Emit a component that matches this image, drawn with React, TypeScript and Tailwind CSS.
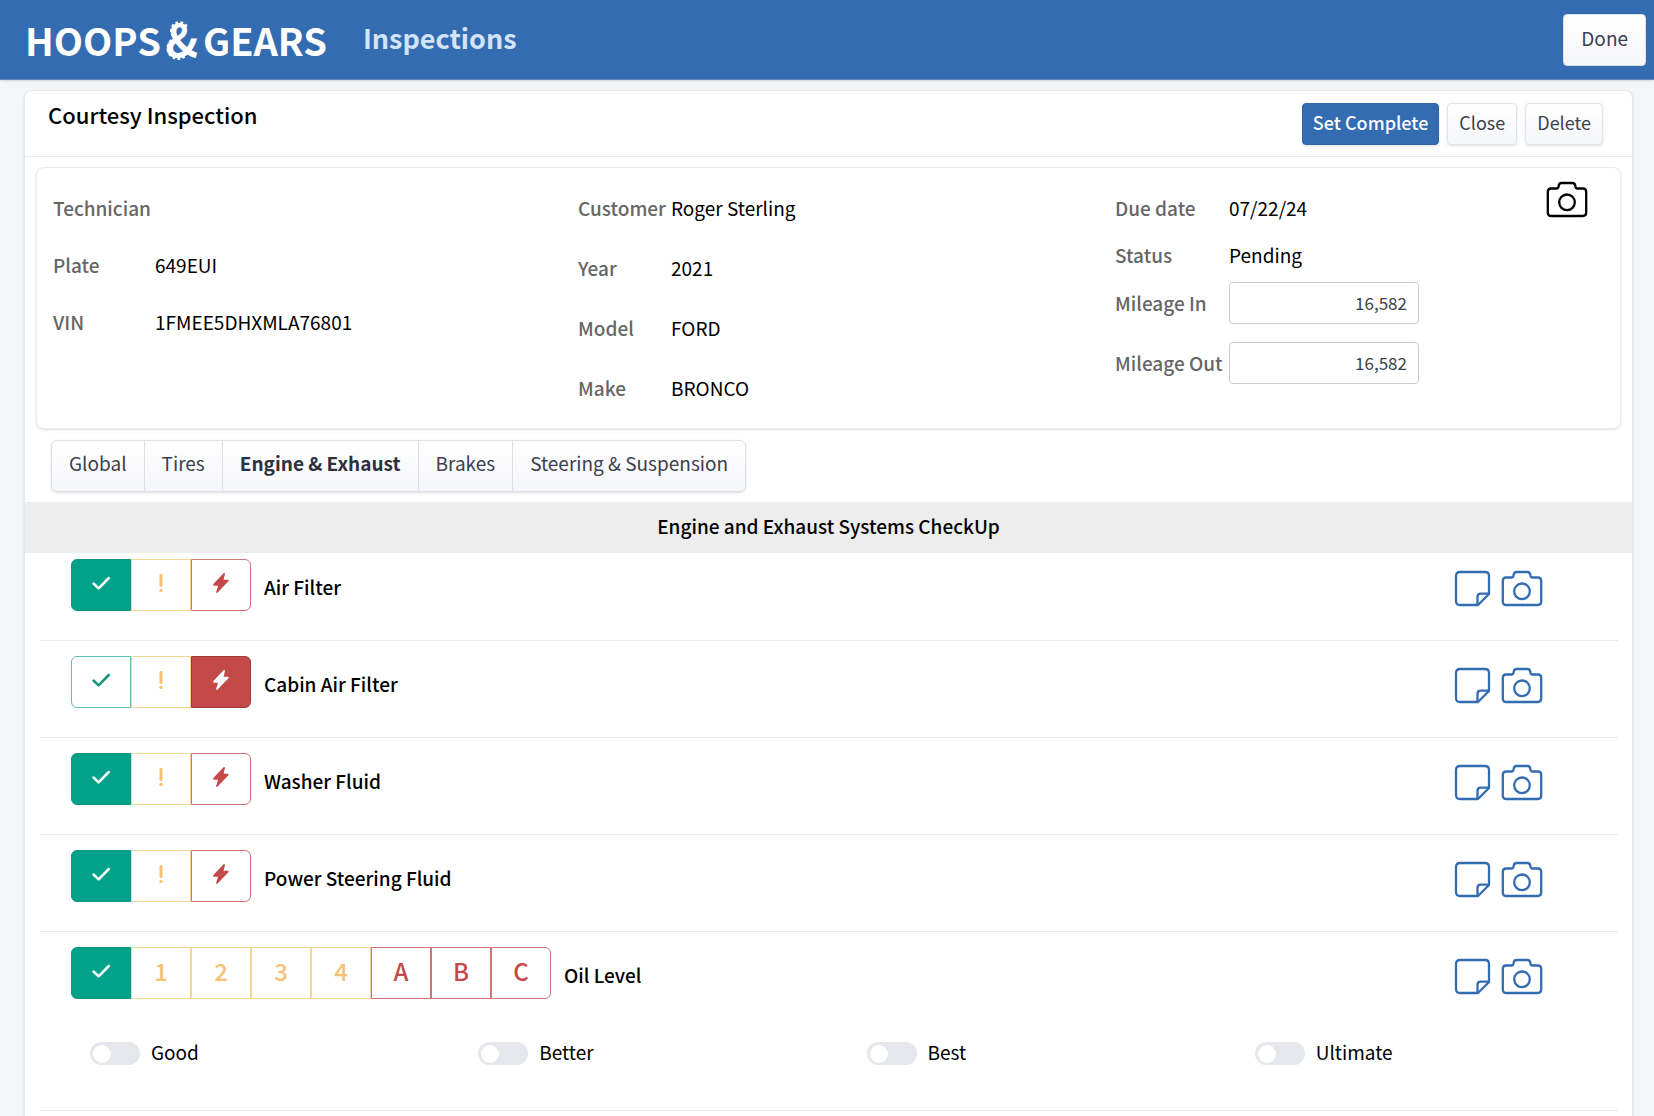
import { useState } from 'react';

type Tone = 'good' | 'warn' | 'bad';

interface Option {
  id: string;
  tone: Tone;
}

interface Item {
  name: string;
  value: string;
  options: Option[];
  grades?: string[];
}

const basicOptions: Option[] = [
  { id: 'ok', tone: 'good' },
  { id: 'warning', tone: 'warn' },
  { id: 'urgent', tone: 'bad' },
];

const oilOptions: Option[] = [
  { id: 'ok', tone: 'good' },
  { id: '1', tone: 'warn' },
  { id: '2', tone: 'warn' },
  { id: '3', tone: 'warn' },
  { id: '4', tone: 'warn' },
  { id: 'A', tone: 'bad' },
  { id: 'B', tone: 'bad' },
  { id: 'C', tone: 'bad' },
];

const initialItems: Item[] = [
  { name: 'Air Filter', value: 'ok', options: basicOptions },
  { name: 'Cabin Air Filter', value: 'urgent', options: basicOptions },
  { name: 'Washer Fluid', value: 'ok', options: basicOptions },
  { name: 'Power Steering Fluid', value: 'ok', options: basicOptions },
  { name: 'Oil Level', value: 'ok', options: oilOptions, grades: ['Good', 'Better', 'Best', 'Ultimate'] },
];

const tabs = ['Global', 'Tires', 'Engine & Exhaust', 'Brakes', 'Steering & Suspension'];

const toneOff: Record<Tone, string> = {
  good: 'border-[#5fc0b0] bg-white text-[#12967f]',
  warn: 'border-[#f6d695] bg-white text-[#f3c273]',
  bad: 'border-[#cf7574] bg-white text-[#c44a4a]',
};

const toneOn: Record<Tone, string> = {
  good: 'border-[#12967f] bg-[#02a28a] text-white',
  warn: 'border-[#e5b25c] bg-[#f3c273] text-white',
  bad: 'border-[#a03a3a] bg-[#c44a4a] text-white',
};

function CameraIcon() {
  return (
    <svg width="42" height="38" viewBox="0 0 42 38" fill="none" stroke="currentColor" strokeWidth="2.3" strokeLinejoin="round" aria-hidden="true">
      <path d="M5 7.5H10.5C12 7.5 12.3 6.6 12.6 5.2C12.9 3.2 13.6 2 15.5 2H26.5C28.4 2 29.1 3.2 29.4 5.2C29.7 6.6 30 7.5 31.5 7.5H37C39.2 7.5 40.2 8.8 40.2 11V31.5C40.2 33.8 39 35 36.8 35H5.2C3 35 1.8 33.8 1.8 31.5V11C1.8 8.8 2.8 7.5 5 7.5Z" />
      <circle cx="21" cy="21.3" r="7.8" />
    </svg>
  );
}

function NoteIcon() {
  return (
    <svg width="38" height="38" viewBox="0 0 38 38" fill="none" stroke="currentColor" strokeWidth="2.3" strokeLinejoin="round" aria-hidden="true">
      <path d="M6 2H31C33.8 2 35 3.2 35 6V24L24 35H6C3.2 35 2 33.8 2 31V6C2 3.2 3.2 2 6 2Z" />
      <path d="M23.5 34.8V27C23.5 24.8 24.5 23.7 26.7 23.7H34.8" />
    </svg>
  );
}

function OptionIcon({ id }: { id: string }) {
  if (id === 'ok') {
    return (
      <svg width="20" height="20" viewBox="0 0 20 20" fill="none" stroke="currentColor" strokeWidth="2.5" strokeLinecap="round" strokeLinejoin="round" aria-hidden="true">
        <path d="M2.5 10.5L7.6 15.3L17.8 5" />
      </svg>
    );
  }
  if (id === 'warning') {
    return (
      <svg width="20" height="20" viewBox="0 0 20 20" fill="currentColor" aria-hidden="true">
        <rect x="8.5" y="1" width="3" height="13" rx="1.4" />
        <circle cx="10" cy="17.4" r="1.7" />
      </svg>
    );
  }
  if (id === 'urgent') {
    return (
      <svg width="20" height="20" viewBox="0 0 20 20" fill="currentColor" aria-hidden="true">
        <path d="M12.6 0.2C13.3 -0.2 14.2 0.2 13.9 1.2L12.6 6.8H16.8C17.8 6.8 17.9 7.8 17.2 8.6L6.6 19.6C5.8 20.2 4.9 19.8 5.2 18.8L7.1 12.8H3.4C2.2 12.8 1.8 11.6 2.6 10.7Z" />
      </svg>
    );
  }
  return <span className="text-2xl leading-6 font-medium">{id}</span>;
}

function Logo() {
  return (
    <a href="#" aria-label="Hoops & Gears" className="flex items-center gap-[2px] text-[38px] leading-10 font-bold text-white">
      <span>HOOPS</span>
      <span className="relative flex h-11 w-[38px] items-center justify-center pb-1 text-[44px]">
        &amp;
        {/* gear teeth around both bowls of the ampersand */}
        <svg className="absolute inset-0" width="38" height="44" viewBox="0 0 38 44" fill="none" stroke="currentColor" strokeWidth="3" aria-hidden="true">
          <path d="M8.5 22.5A10 10 0 1 0 22 38" strokeDasharray="2.6 2.2" />
          <path d="M10.5 18A8 8 0 1 1 24 10" strokeDasharray="2.6 2.2" />
        </svg>
      </span>
      <span>GEARS</span>
    </a>
  );
}

function Field({ label, value, className }: { label: string; value: string; className: string }) {
  return (
    <div className={`flex items-center ${className}`}>
      <dt className="shrink-0 font-medium text-[#666]">{label}</dt>
      <dd>{value}</dd>
    </div>
  );
}

export default function App() {
  const [items, setItems] = useState(initialItems);
  const [tab, setTab] = useState('Engine & Exhaust');
  const [mileageIn, setMileageIn] = useState('16,582');
  const [mileageOut, setMileageOut] = useState('16,582');

  const setValue = (name: string, value: string) => {
    setItems(items.map((item) => (item.name === name ? { ...item, value } : item)));
  };

  return (
    <div className="min-h-screen bg-[#f5f6f9] font-['Noto_Sans_CJK_SC','Noto_Sans',sans-serif] text-[19px] leading-6 text-black">
      <header className="flex h-20 items-center border-b border-[#5c89c0] bg-[#336cb0] pr-2 pl-[25px] shadow-sm">
        <Logo />
        <h1 className="ml-9 pb-1 text-[27px] leading-8 font-bold text-[#d3e3f8]">Inspections</h1>
        <button className="ml-auto h-[52px] rounded border border-[#dfe1e8] bg-linear-to-b from-white to-[#f5f6f9] px-[17px] pb-1 text-[#3c3f4c]">Done</button>
      </header>

      <main className="mt-[10px] mr-[21px] ml-6 rounded-lg border border-b-0 border-[#e6e8ec] bg-white pb-8 shadow-sm">
        <div className="flex items-start border-b border-[#ebebeb] pt-3 pr-[29px] pb-[11px] pl-[23px]">
          <h2 className="text-[22px] leading-[22px] font-medium">Courtesy Inspection</h2>
          <div className="ml-auto flex gap-2 text-lg">
            <button className="h-[42px] rounded border border-[#2f66a8] bg-[#336cb0] px-[10px] pb-1 font-medium text-white shadow-sm">Set Complete</button>
            <button className="h-[42px] rounded border border-[#e2e4ea] bg-linear-to-b from-white to-[#f5f6f9] px-[11px] pb-1 text-[#3c3f4c] shadow-sm">Close</button>
            <button className="h-[42px] rounded border border-[#e2e4ea] bg-linear-to-b from-white to-[#f5f6f9] px-[11px] pb-1 text-[#3c3f4c] shadow-sm">Delete</button>
          </div>
        </div>

        <section className="mx-[11px] mt-[10px] grid h-[262px] grid-cols-[525fr_537fr_473fr] items-start rounded-lg border border-[#ebebeb] pr-8 pl-4 shadow-sm">
          <dl className="flex flex-col gap-[33px] pt-7">
            <Field label="Technician" value="" className="[&>dt]:w-[102px]" />
            <Field label="Plate" value="649EUI" className="[&>dt]:w-[102px]" />
            <Field label="VIN" value="1FMEE5DHXMLA76801" className="[&>dt]:w-[102px]" />
          </dl>
          <dl className="flex flex-col gap-9 pt-7">
            <Field label="Customer" value="Roger Sterling" className="[&>dt]:w-[93px]" />
            <Field label="Year" value="2021" className="[&>dt]:w-[93px]" />
            <Field label="Model" value="FORD" className="[&>dt]:w-[93px]" />
            <Field label="Make" value="BRONCO" className="[&>dt]:w-[93px]" />
          </dl>
          <div className="flex items-start justify-between">
            <div className="pt-7">
              <dl className="flex flex-col gap-[23px]">
                <Field label="Due date" value="07/22/24" className="[&>dt]:w-[114px]" />
                <Field label="Status" value="Pending" className="[&>dt]:w-[114px]" />
              </dl>
              <div className="mt-[15px] flex items-center">
                <label htmlFor="mileage-in" className="w-[114px] font-medium text-[#666]">Mileage In</label>
                <input
                  id="mileage-in"
                  value={mileageIn}
                  onChange={(e) => setMileageIn(e.target.value)}
                  className="h-[42px] w-[190px] rounded border border-[#cbcbd4] px-[11px] pb-[2px] text-right text-[17px] text-[#3c3f4c]"
                />
              </div>
              <div className="mt-[18px] flex items-center">
                <label htmlFor="mileage-out" className="w-[114px] font-medium text-[#666]">Mileage Out</label>
                <input
                  id="mileage-out"
                  value={mileageOut}
                  onChange={(e) => setMileageOut(e.target.value)}
                  className="h-[42px] w-[190px] rounded border border-[#cbcbd4] px-[11px] pb-[2px] text-right text-[17px] text-[#3c3f4c]"
                />
              </div>
            </div>
            <button aria-label="Add photo" className="mt-[13px]">
              <CameraIcon />
            </button>
          </div>
        </section>

        <nav className="mt-[11px] ml-[26px] flex h-[52px] w-fit divide-x divide-[#dcdfe6] rounded-md border border-[#dcdfe6] bg-linear-to-b from-white to-[#f5f6f9] shadow-sm">
          {tabs.map((name) => (
            <button
              key={name}
              onClick={() => setTab(name)}
              className={`px-[17px] pb-1.5 ${name === tab ? 'font-bold text-[#2d303d]' : 'text-[#3c3f4c]'}`}
            >
              {name}
            </button>
          ))}
        </nav>

        <h3 className="mt-[10px] h-[51px] bg-[#ededed] pt-3 text-center font-medium">Engine and Exhaust Systems CheckUp</h3>

        <ul className="mr-[14px] ml-[15px]">
          {items.map((item) => (
            <li key={item.name} className="border-b border-[#ebebeb] pt-[15px] pb-[29px] pl-[31px] first:pt-[6px]">
              <div className="flex h-[52px] items-center pr-[75px]">
                <div className="flex" role="group" aria-label={item.name}>
                  {item.options.map((option) => (
                    <button
                      key={option.id}
                      aria-label={option.id}
                      aria-pressed={item.value === option.id}
                      onClick={() => setValue(item.name, option.id)}
                      className={`flex h-[52px] w-[60px] items-center justify-center border pb-1 first:rounded-l-md last:rounded-r-md ${item.value === option.id ? toneOn[option.tone] : toneOff[option.tone]}`}
                    >
                      <OptionIcon id={option.id} />
                    </button>
                  ))}
                </div>
                <span className="ml-[13px] pt-1 font-medium">{item.name}</span>
                <div className="mt-2 ml-auto flex gap-[9px] text-[#336cb0]">
                  <button aria-label={`Add note to ${item.name}`}>
                    <NoteIcon />
                  </button>
                  <button aria-label={`Add photo to ${item.name}`}>
                    <CameraIcon />
                  </button>
                </div>
              </div>
              {item.grades && (
                <div className="mt-[43px] grid grid-cols-[388fr_388fr_388fr_363fr] pb-4 pl-[19px]">
                  {item.grades.map((grade) => (
                    <label key={grade} className="flex items-start gap-[11px] leading-5">
                      <input
                        type="checkbox"
                        role="switch"
                        className="flex h-[23px] w-[50px] appearance-none items-center rounded-full bg-[#e5e7ed] px-[3px] before:size-[18px] before:rounded-full before:bg-white checked:justify-end checked:bg-[#336cb0]"
                      />
                      {grade}
                    </label>
                  ))}
                </div>
              )}
            </li>
          ))}
        </ul>
      </main>
    </div>
  );
}
